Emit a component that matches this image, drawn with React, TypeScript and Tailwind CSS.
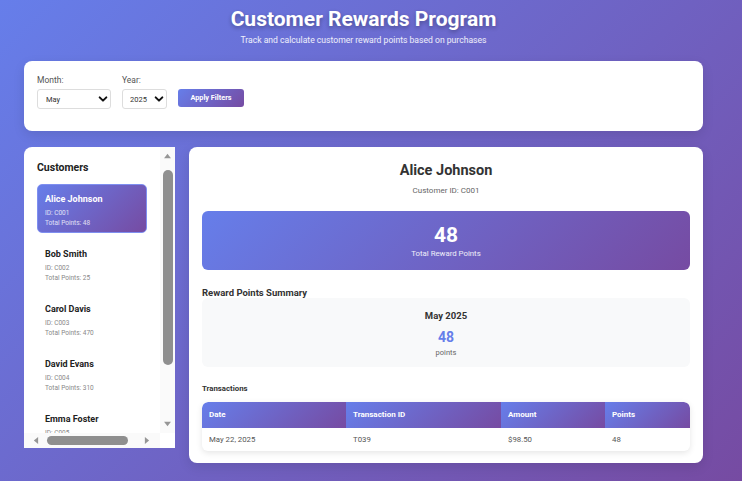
import { useState } from "react";

const customers = [
  { id: "C001", name: "Alice Johnson", points: 48 },
  { id: "C002", name: "Bob Smith", points: 25 },
  { id: "C003", name: "Carol Davis", points: 470 },
  { id: "C004", name: "David Evans", points: 310 },
  { id: "C005", name: "Emma Foster", points: 120 },
  { id: "C006", name: "Frank Green", points: 90 },
];

const grad = "bg-[linear-gradient(135deg,#667eea_0%,#764ba2_100%)]";

function Chevron() {
  return (
    <svg
      viewBox="0 0 12 12"
      className="pointer-events-none absolute right-[3px] bottom-[5px] h-[10px] w-[10px]"
    >
      <path d="M2 4 L6 8 L10 4" fill="none" stroke="#111" strokeWidth="2.4" strokeLinecap="round" strokeLinejoin="round" />
    </svg>
  );
}

function Arrow({ dir }: { dir: "up" | "down" | "left" | "right" }) {
  const pts = {
    up: "1,6 5,1 9,6",
    down: "1,1 5,6 9,1",
    left: "6,1 1,5 6,9",
    right: "1,1 6,5 1,9",
  }[dir];
  const box = dir === "up" || dir === "down" ? "0 0 10 7" : "0 0 7 10";
  const size = dir === "up" || dir === "down" ? "w-[9px] h-[6px]" : "w-[6px] h-[9px]";
  return (
    <svg viewBox={box} className={size}>
      <polygon points={pts} fill="#969696" />
    </svg>
  );
}

export default function App() {
  const [selected, setSelected] = useState("C001");

  return (
    <div
      className={`min-h-[481px] w-full ${grad} pt-[6px] pb-[18px]`}
      style={{ fontFamily: "Roboto, 'Noto Sans', sans-serif" }}
    >
      <div className="w-[727px] px-6">
        {/* Header */}
        <header className="text-center text-white">
          <h1 className="text-[21px] font-bold leading-[26px] [text-shadow:0_2px_4px_rgba(0,0,0,0.3)]">
            Customer Rewards Program
          </h1>
          <p className="mt-[2px] text-[8.6px] leading-[12px] text-white/90">
            Track and calculate customer reward points based on purchases
          </p>
        </header>

        {/* Filters */}
        <section className="mt-[15px] h-[70px] rounded-lg bg-white px-[13px] pt-[14px] shadow-[0_4px_12px_rgba(0,0,0,0.1)]">
          <div className="flex items-end gap-[11px]">
            <label className="relative flex flex-col gap-[3px] text-[8.5px] leading-[11px] text-[#555]">
              Month:
              <select
                defaultValue="May"
                className="h-[20px] w-[74px] appearance-none rounded-[3px] border border-[#ddd] bg-white pl-[8px] text-[7.5px] text-[#333]"
              >
                <option>May</option>
              </select>
              <Chevron />
            </label>
            <label className="relative flex flex-col gap-[3px] text-[8.5px] leading-[11px] text-[#555]">
              Year:
              <select
                defaultValue="2025"
                className="h-[20px] w-[45px] appearance-none rounded-[3px] border border-[#ddd] bg-white pl-[7px] text-[7.5px] text-[#333]"
              >
                <option>2025</option>
              </select>
              <Chevron />
            </label>
            <button
              className={`mb-[2px] h-[18px] w-[66px] rounded-[3px] ${grad} text-[7.3px] font-bold text-white`}
            >
              Apply Filters
            </button>
          </div>
        </section>

        <div className="mt-4 flex items-start gap-[14px]">
          {/* Customers list with its scrollbars */}
          <aside className="grid h-[301px] w-[151px] shrink-0 grid-cols-[136px_15px] grid-rows-[286px_15px] overflow-hidden rounded-tl-lg bg-white">
            <div className="overflow-hidden">
              <div className="w-[172px] px-[13px] pt-[13px] pb-[13px]">
                <h2 className="text-[10.5px] font-bold leading-[16px] text-[#222]">Customers</h2>
                <div className="mt-[8px] flex w-[110px] flex-col gap-[6px]">
                  {customers.map((c) => {
                    const active = c.id === selected;
                    return (
                      <button
                        key={c.id}
                        onClick={() => setSelected(c.id)}
                        className={`h-[49px] rounded-[5px] border px-[7px] pt-[3px] text-left ${
                          active
                            ? `${grad} border-[#7f8ff0] text-white`
                            : "border-transparent bg-white text-[#222]"
                        }`}
                      >
                        <div className="text-[9px] font-bold leading-[13px]">{c.name}</div>
                        <div
                          className={`mt-[2px] text-[6.5px] leading-[10px] ${
                            active ? "text-white/80" : "text-[#888]"
                          }`}
                        >
                          ID: {c.id}
                        </div>
                        <div
                          className={`text-[6.5px] leading-[10px] ${
                            active ? "text-white/80" : "text-[#888]"
                          }`}
                        >
                          Total Points: {c.points}
                        </div>
                      </button>
                    );
                  })}
                </div>
              </div>
            </div>
            {/* vertical scrollbar */}
            <div className="flex flex-col items-center bg-[#fafafa] pt-[6px] pb-[6px]">
              <Arrow dir="up" />
              <div className="mt-[11px] h-[195px] w-[10px] rounded-full bg-[#8f8f8f]" />
              <div className="flex-1" />
              <Arrow dir="down" />
            </div>
            {/* horizontal scrollbar */}
            <div className="flex items-center bg-[#fafafa] pl-[9px] pr-[10px]">
              <Arrow dir="left" />
              <div className="ml-[8px] h-[9px] w-[81px] rounded-full bg-[#8f8f8f]" />
              <div className="flex-1" />
              <Arrow dir="right" />
            </div>
            <div className="bg-white" />
          </aside>

          {/* Detail */}
          <main className="flex-1 rounded-lg bg-white px-[13px] pt-[14px] pb-[12px] shadow-[0_4px_12px_rgba(0,0,0,0.1)]">
            <div className="text-center">
              <h2 className="text-[14.5px] font-bold leading-[20px] text-[#333]">Alice Johnson</h2>
              <p className="mt-[5px] text-[8px] leading-[10px] text-[#666]">Customer ID: C001</p>
            </div>

            <div className={`mt-[15px] flex h-[59px] flex-col items-center justify-center rounded-[6px] ${grad} text-white`}>
              <div className="text-[21px] font-bold leading-[24px]">48</div>
              <div className="mt-[2px] text-[7.8px] leading-[10px] text-white/90">Total Reward Points</div>
            </div>

            <h3 className="mt-[18px] text-[9.5px] font-bold leading-[10px] text-[#333]">Reward Points Summary</h3>
            <div className="flex h-[69px] flex-col items-center rounded-[6px] bg-[#f8f9fa] pt-[11px]">
              <div className="text-[9.5px] font-bold leading-[13px] text-[#333]">May 2025</div>
              <div className="mt-[7px] text-[14px] font-bold leading-[17px] text-[#667eea]">48</div>
              <div className="mt-[1px] text-[7.5px] leading-[11px] text-[#666]">points</div>
            </div>

            <h4 className="mt-[17px] text-[7.8px] font-bold leading-[10px] text-[#333]">Transactions</h4>
            <table className="mt-[8px] w-full border-collapse overflow-hidden rounded-[6px] shadow-[0_2px_6px_rgba(0,0,0,0.1)]">
              <thead>
                <tr className="h-[26px] text-left text-[8px] font-bold text-white">
                  <th className={`w-[144px] px-[7px] ${grad} rounded-tl-[6px]`}>Date</th>
                  <th className={`w-[155px] px-[7px] ${grad}`}>Transaction ID</th>
                  <th className={`w-[104px] px-[7px] ${grad}`}>Amount</th>
                  <th className={`px-[7px] ${grad} rounded-tr-[6px]`}>Points</th>
                </tr>
              </thead>
              <tbody>
                <tr className="h-[23px] text-[7.8px] text-[#555]">
                  <td className="px-[7px]">May 22, 2025</td>
                  <td className="px-[7px]">T039</td>
                  <td className="px-[7px]">$98.50</td>
                  <td className="px-[7px]">48</td>
                </tr>
              </tbody>
            </table>
          </main>
        </div>
      </div>
    </div>
  );
}
